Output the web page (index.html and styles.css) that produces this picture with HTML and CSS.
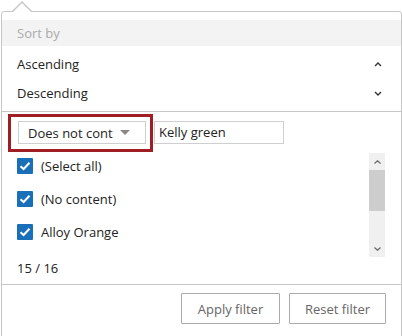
FILE: index.html
```html
<!DOCTYPE html>
<html>
<head>
    <meta name="viewport" content="width=device-width, initial-scale=1">
    <link rel="stylesheet" href="styles.css">
</head>
<body>
    <div class="popup">

        <div class="section-title">Sort by</div>
        <div class="sort-list">
            <div class="sort-row">
                <span>Ascending</span>
                <svg class="chevron" width="8" height="5" viewBox="0 0 8 5"><path d="M1 4 L4 1 L7 4" fill="none" stroke="#333" stroke-width="1.4"/></svg>
            </div>
            <div class="sort-row">
                <span>Descending</span>
                <svg class="chevron" width="8" height="5" viewBox="0 0 8 5"><path d="M1 1 L4 4 L7 1" fill="none" stroke="#333" stroke-width="1.4"/></svg>
            </div>
        </div>

        <div class="filter-row">
            <div class="highlight">
                <div class="dropdown">
                    <span>Does not cont</span>
                    <span class="caret"></span>
                </div>
            </div>
            <div class="textbox">Kelly green</div>
        </div>

        <div class="list">
            <div class="items">
                <div class="item"><span class="check"><svg width="16" height="16" viewBox="0 0 16 16"><path d="M3.5 8.2 L6.6 11 L12.5 4.8" fill="none" stroke="#fff" stroke-width="2"/></svg></span>(Select all)</div>
                <div class="item"><span class="check"><svg width="16" height="16" viewBox="0 0 16 16"><path d="M3.5 8.2 L6.6 11 L12.5 4.8" fill="none" stroke="#fff" stroke-width="2"/></svg></span>(No content)</div>
                <div class="item"><span class="check"><svg width="16" height="16" viewBox="0 0 16 16"><path d="M3.5 8.2 L6.6 11 L12.5 4.8" fill="none" stroke="#fff" stroke-width="2"/></svg></span>Alloy Orange</div>
            </div>
            <div class="scrollbar">
                <div class="arrow"><svg width="7" height="4" viewBox="0 0 7 4"><path d="M0.5 3.5 L3.5 0.8 L6.5 3.5" fill="none" stroke="#666" stroke-width="1.2"/></svg></div>
                <div class="thumb"></div>
                <div class="track"></div>
                <div class="arrow"><svg width="7" height="4" viewBox="0 0 7 4"><path d="M0.5 0.5 L3.5 3.2 L6.5 0.5" fill="none" stroke="#666" stroke-width="1.2"/></svg></div>
            </div>
        </div>

        <div class="count">15 / 16</div>

        <div class="footer">
            <button class="btn apply">Apply filter</button>
            <button class="btn reset">Reset filter</button>
        </div>

    </div>
</body>
</html>
```

FILE: styles.css
```css
html, body {
    margin: 0;
    background-color: #ffffff;
}

body {
    font-family: "Segoe UI", "Open Sans", sans-serif;
    font-size: 13px;
    color: #222;
    padding: 11px 0 0 1px;
}

.popup {
    position: relative;
    width: 399px;
    height: 323px;
    border: 1px solid #c6c6c6;
    border-radius: 3px;
    display: flex;
    flex-direction: column;
    padding-top: 8px;
    box-sizing: content-box;
}

/* little pointer on top */
.popup::before,
.popup::after {
    content: "";
    position: absolute;
    left: 9px;
    top: -11px;
    border-left: 11px solid transparent;
    border-right: 11px solid transparent;
    border-bottom: 11px solid #c6c6c6;
}

.popup::after {
    left: 10px;
    top: -9px;
    border-left-width: 10px;
    border-right-width: 10px;
    border-bottom: 10px solid #ffffff;
}

.section-title {
    height: 26px;
    line-height: 26px;
    background-color: #f3f3f3;
    color: #aaa;
    padding-left: 15px;
}

.sort-list {
    padding: 4px 0 3px;
    border-bottom: 1px solid #c6c6c6;
}

.sort-row {
    height: 29px;
    display: flex;
    align-items: center;
    justify-content: space-between;
    padding: 0 19px 0 15px;
}

.sort-row span {
    margin-top: -1px;
}

.filter-row {
    display: flex;
    align-items: flex-start;
    padding: 2px 0 0 6px;
}

.highlight {
    border: 3px solid #a11d24;
    padding: 4px 4px 5px 7px;
}

.dropdown {
    width: 128px;
    height: 23px;
    box-sizing: border-box;
    border: 1px solid #cfcfcf;
    display: flex;
    align-items: center;
    justify-content: space-between;
    padding: 0 15px 0 9px;
}

.caret {
    width: 0;
    height: 0;
    border-left: 5px solid transparent;
    border-right: 5px solid transparent;
    border-top: 5px solid #888;
}

.textbox {
    margin: 7px 0 0 1px;
    width: 130px;
    height: 23px;
    box-sizing: border-box;
    border: 1px solid #cfcfcf;
    line-height: 21px;
    padding-left: 4px;
}

.list {
    display: flex;
    height: 104px;
    margin-top: 1px;
}

.items {
    flex: 1;
    overflow: hidden;
    padding: 5px 0 0 15px;
}

.item {
    height: 16px;
    display: flex;
    align-items: center;
    margin-bottom: 17px;
}

.check {
    width: 16px;
    height: 16px;
    background-color: #1a70b8;
    border-radius: 1px;
    margin-right: 8px;
    display: flex;
}

.scrollbar {
    width: 16px;
    margin-right: 16px;
    background-color: #f0f0f0;
    display: flex;
    flex-direction: column;
}

.arrow {
    height: 17px;
    display: flex;
    align-items: center;
    justify-content: center;
}

.thumb {
    height: 41px;
    background-color: #cdcdcd;
}

.track {
    flex: 1;
}

.count {
    line-height: 20px;
    padding: 1px 0 6px 15px;
}

.footer {
    border-top: 1px solid #c6c6c6;
    display: flex;
    justify-content: flex-end;
    gap: 9px;
    padding: 8px 15px 0 0;
}

.btn {
    height: 31px;
    background-color: #fff;
    border: 1px solid #aaa;
    border-radius: 1px;
    font-family: inherit;
    font-size: 13px;
    color: #666;
    padding: 0;
}

.apply {
    width: 99px;
}

.reset {
    width: 97px;
}
```
